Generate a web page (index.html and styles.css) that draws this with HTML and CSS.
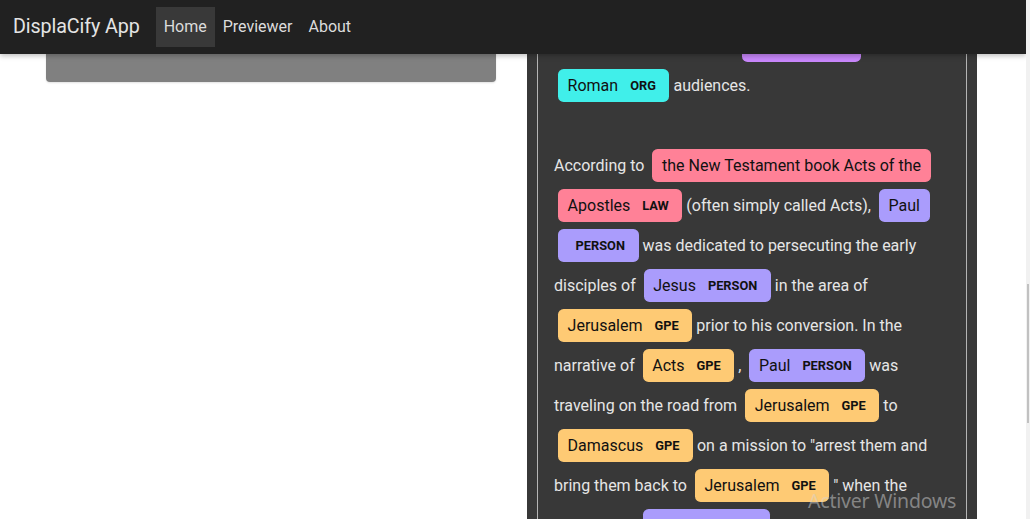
FILE: index.html
```html
<!DOCTYPE html>
<html lang="fr">
<head>
<meta charset="utf-8">
<title>DisplaCify App</title>
<link rel="stylesheet" href="styles.css">
</head>
<body>
<div class="frame">
  <div class="app">
    <nav class="navbar">
      <span class="brand">DisplaCify App</span>
      <a class="nav-link active">Home</a>
      <a class="nav-link">Previewer</a>
      <a class="nav-link">About</a>
    </nav>
    <main class="content">
      <section class="left">
        <div class="grey-box"></div>
      </section>
      <section class="right">
        <div class="panel-inner">
          <div class="entities">in all his ministry for both <mark class="entity norp">Jewish <span class="label">NORP</span> </mark> and <mark class="entity org">Roman <span class="label">ORG</span> </mark> audiences.<br><br>According to <mark class="entity law">the New Testament book Acts of the Apostles <span class="label">LAW</span> </mark> (often simply called Acts), <mark class="entity person">Paul <span class="label">PERSON</span> </mark> was dedicated to persecuting the early disciples of <mark class="entity person">Jesus <span class="label">PERSON</span> </mark> in the area of <mark class="entity gpe">Jerusalem <span class="label">GPE</span> </mark> prior to his conversion. In the narrative of <mark class="entity gpe">Acts <span class="label">GPE</span> </mark> , <mark class="entity person">Paul <span class="label">PERSON</span> </mark> was traveling on the road from <mark class="entity gpe">Jerusalem <span class="label">GPE</span> </mark> to <mark class="entity gpe">Damascus <span class="label">GPE</span> </mark> on a mission to "arrest them and bring them back to <mark class="entity gpe">Jerusalem <span class="label">GPE</span> </mark> " when the resurrected <mark class="entity person">Jesus <span class="label">PERSON</span> </mark> appeared to him in a great bright light.</div>
        </div>
      </section>
    </main>
    <div class="watermark">
      <div class="wm-title">Activer Windows</div>
      <div class="wm-sub">Accédez aux paramètres pour activer Windows.</div>
    </div>
  </div>
  <div class="scroll-track"><div class="scroll-thumb"></div></div>
</div>
</body>
</html>
```
FILE: styles.css
```css
html, body {
  margin: 0;
  padding: 0;
  height: 519px;
  overflow: hidden;
  background: #ffffff;
  font-family: Roboto, "Liberation Sans", sans-serif;
}

.frame {
  display: flex;
  height: 519px;
}

.app {
  flex: 1;
  position: relative;
  overflow: hidden;
}

.navbar {
  position: absolute;
  top: 0;
  left: 0;
  right: 0;
  height: 54px;
  background: #212121;
  box-shadow: 0 2px 5px rgba(0, 0, 0, 0.25);
  display: flex;
  align-items: center;
  padding-left: 13px;
  box-sizing: border-box;
  z-index: 10;
}

.brand {
  font-size: 19.7px;
  color: #e4e4e4;
  margin-right: 16px;
  padding-bottom: 1px;
  letter-spacing: -0.1px;
}

.nav-link {
  height: 40px;
  display: flex;
  align-items: center;
  padding: 0 8px;
  font-size: 16px;
  color: #dcdcdc;
  margin-top: -1px;
}

.nav-link.active {
  background: #393939;
}

.content {
  display: flex;
  gap: 31px;
  padding-left: 46px;
}

.left {
  width: 450px;
}

.grey-box {
  height: 82px;
  background: #808080;
  border-radius: 0 0 4px 4px;
  box-shadow: 0 1px 2px rgba(0, 0, 0, 0.12);
}

.right {
  width: 450px;
  background: #383838;
  padding: 0 10px;
  box-sizing: border-box;
  height: 560px;
}

.panel-inner {
  border-left: 1px solid #b4b4b4;
  border-right: 1px solid #b4b4b4;
  padding: 26px 16px 0 16px;
  height: 100%;
  box-sizing: border-box;
}

.entities {
  line-height: 2.5;
  font-size: 16px;
  color: #e6e6e6;
  direction: ltr;
}

.entity {
  padding: 0.45em 0.6em;
  margin: 0 0.25em;
  line-height: 1;
  border-radius: 0.35em;
  color: #111111;
  -webkit-box-decoration-break: clone;
  box-decoration-break: clone;
}

.label {
  font-size: 0.8em;
  font-weight: bold;
  line-height: 1;
  vertical-align: middle;
  margin-left: 0.5rem;
  color: #111111;
}

.norp { background: #c887fb; }
.org { background: #40efea; }
.law { background: #ff8197; }
.person { background: #aa9cfc; }
.gpe { background: #feca74; }

.watermark {
  position: absolute;
  left: 808px;
  top: 488px;
  color: rgba(210, 210, 210, 0.5);
  font-family: "Noto Sans", "Open Sans", sans-serif;
  z-index: 20;
  pointer-events: none;
}

.wm-title {
  font-size: 19.5px;
  line-height: 26px;
  letter-spacing: -0.2px;
}

.wm-sub {
  font-size: 13px;
  line-height: 18px;
  margin-top: 2px;
}

.scroll-track {
  width: 4px;
  background: #f1f1f1;
}

.scroll-thumb {
  margin-top: 284px;
  margin-left: 1px;
  width: 2px;
  height: 139px;
  background: #c1c1c1;
}
```
